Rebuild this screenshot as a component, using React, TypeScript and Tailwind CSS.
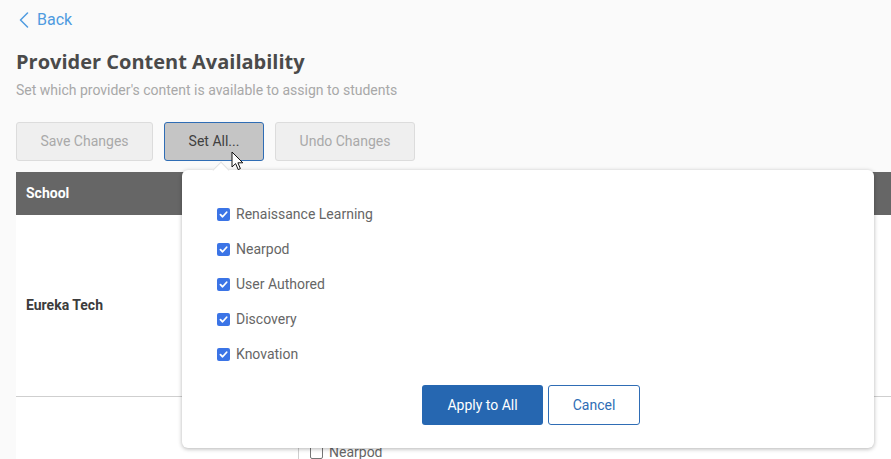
const providers = ['Renaissance Learning', 'Nearpod', 'User Authored', 'Discovery', 'Knovation'];

function CheckBox({ checked }: { checked: boolean }) {
  if (!checked) {
    return <span className="w-[13px] h-[13px] rounded-[2px] border border-[#767676] bg-white shrink-0" />;
  }
  return (
    <span className="w-[13px] h-[13px] rounded-[2px] bg-[#3b74e6] flex items-center justify-center shrink-0">
      <svg width="9" height="9" viewBox="0 0 10 10" fill="none">
        <path d="M1.6 5.2 L4 7.5 L8.5 2.5" stroke="white" strokeWidth="2" strokeLinecap="round" strokeLinejoin="round" />
      </svg>
    </span>
  );
}

export default function App() {
  return (
    <div className="relative w-[891px] h-[459px] overflow-hidden bg-[#fafafa] font-['Roboto',sans-serif]">
      <div className="pl-4 pt-[10px]">
        <button className="flex items-center gap-[8px] text-[#4f9be0] text-[16px] h-[20px] pl-[3px]">
          <svg width="10" height="16" viewBox="0 0 10 16" fill="none">
            <path d="M8.5 1 L1.5 8 L8.5 15" stroke="currentColor" strokeWidth="1.5" strokeLinecap="round" strokeLinejoin="round" />
          </svg>
          Back
        </button>

        <h1 className="mt-[20px] font-['Open_Sans',sans-serif] font-bold text-[20px] leading-[24px] text-[#4a4a4a]">
          Provider Content Availability
        </h1>
        <p className="mt-[8px] text-[14px] leading-[16px] text-[#a8a8a8]">
          Set which provider's content is available to assign to students
        </p>

        <div className="mt-[24px] flex gap-[11px]">
          <button className="w-[137px] h-[39px] rounded-[3px] border border-[#dcdcdc] bg-[#efefef] text-[14px] text-[#a9a9a9]">
            Save Changes
          </button>
          <button className="w-[100px] h-[39px] rounded-[3px] border border-[#2f6db5] bg-[#c5c5c5] text-[14px] text-[#404040]">
            Set All...
          </button>
          <button className="w-[140px] h-[39px] rounded-[3px] border border-[#dcdcdc] bg-[#efefef] text-[14px] text-[#a9a9a9]">
            Undo Changes
          </button>
        </div>

        <div className="mt-[11px] w-[900px]">
          <div className="h-[43px] bg-[#666666] flex items-center px-[10px] text-white font-bold text-[14px]">
            School
          </div>
          <div className="h-[182px] bg-white border-b border-[#cfcfcf] grid grid-cols-[282px_1fr]">
            <div className="flex items-center px-[10px] font-bold text-[14px] text-[#3c3c3c]">Eureka Tech</div>
            <div className="border-l border-[#cfcfcf]" />
          </div>
          <div className="h-[100px] bg-white grid grid-cols-[282px_1fr]">
            <div />
            <div className="border-l border-[#cfcfcf] pl-[11px] pt-[45px]">
              <div className="flex items-center gap-[6px] text-[14px] text-[#666]">
                <CheckBox checked={false} />
                Nearpod
              </div>
            </div>
          </div>
        </div>
      </div>

      {/* popover */}
      <div className="absolute left-[182px] top-[170px] w-[692px] h-[278px] bg-white rounded-[6px] shadow-[0_1px_4px_rgba(0,0,0,0.3)]">
        <div className="absolute left-[33px] -top-[6px] w-[12px] h-[12px] rotate-45 bg-white border-l border-t border-[#e2e2e2]" />
        <div className="pl-[35px] pt-[36px] flex flex-col gap-[19px]">
          {providers.map((p) => (
            <label key={p} className="flex items-center gap-[6px] h-[16px] text-[14px] text-[#666]">
              <CheckBox checked />
              {p}
            </label>
          ))}
        </div>
        <div className="absolute left-[240px] top-[215px] flex gap-[5px]">
          <button className="w-[121px] h-[40px] rounded-[3px] bg-[#2667b1] text-white text-[14px]">Apply to All</button>
          <button className="w-[92px] h-[40px] rounded-[3px] bg-white border border-[#2f6db5] text-[#2f6db5] text-[14px]">
            Cancel
          </button>
        </div>
      </div>

      {/* mouse cursor */}
      <svg className="absolute left-[231px] top-[151px]" width="14" height="21" viewBox="0 0 14 21">
        <path d="M1 1 L1 16 L4.6 12.6 L7.2 18.6 L9.4 17.6 L6.9 11.8 L11.8 11.8 Z" fill="white" stroke="#111" strokeWidth="1" strokeLinejoin="round" />
      </svg>
    </div>
  );
}
